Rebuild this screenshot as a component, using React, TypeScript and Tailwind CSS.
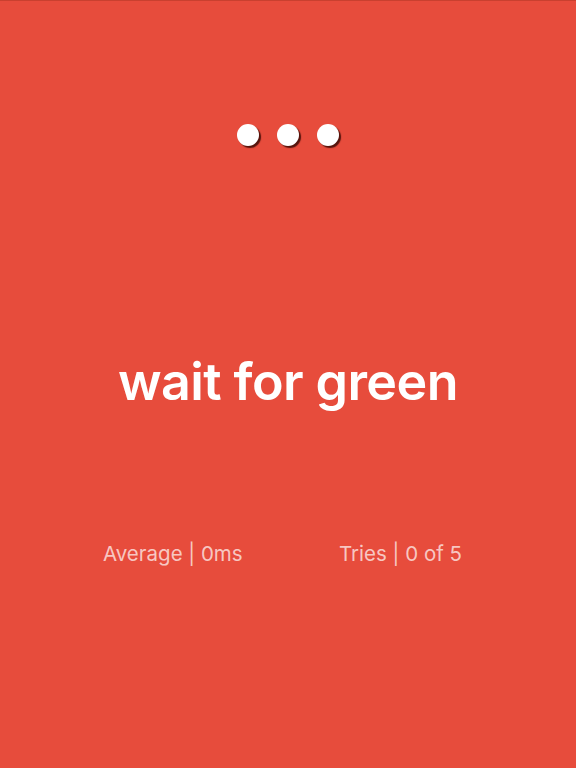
import React from 'react';

export default function App() {
  return (
    <div className="w-[576px] h-[768px] bg-[#e74c3c] border-t border-[#c9402f] flex flex-col items-center" style={{ fontFamily: 'Inter, "Noto Sans", sans-serif' }}>
      <div className="flex gap-[18px] mt-[123px]">
        {[0, 1, 2].map((i) => (
          <div key={i} className="w-[22px] h-[22px] rounded-full bg-white shadow-[2px_2px_1px_rgba(60,10,5,0.85)]" />
        ))}
      </div>
      <h1 className="mt-[206px] text-[52px] leading-[60px] font-semibold text-white tracking-[-0.6px]">wait for green</h1>
      <div className="mt-[128px] mr-[11px] flex w-[359px] justify-between text-[20.5px] leading-[28px] text-white/70">
        <span>Average | 0ms</span>
        <span>Tries | 0 of 5</span>
      </div>
    </div>
  );
}
